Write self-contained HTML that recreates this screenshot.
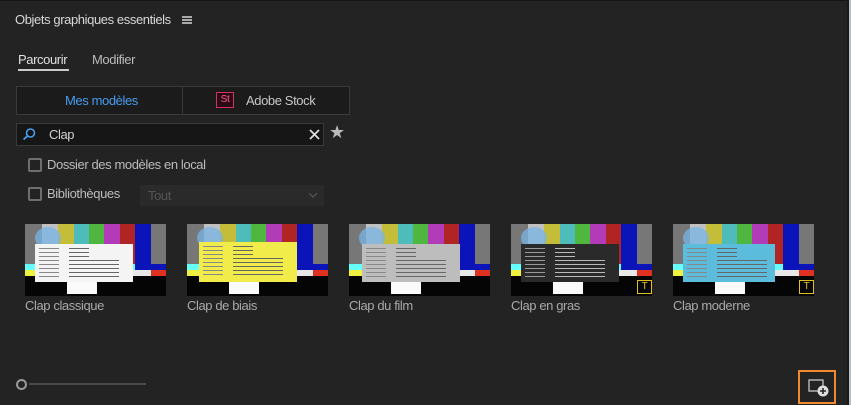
<!DOCTYPE html>
<html><head><meta charset="utf-8"><style>
*{margin:0;padding:0;box-sizing:border-box}
body{width:851px;height:405px;background:#232323;position:relative;overflow:hidden;font-family:"Liberation Sans",sans-serif;color:#c8c8c8;letter-spacing:-0.4px}
.a{position:absolute}
.th{position:absolute;top:224px;width:141px;height:72px;background:#000;overflow:hidden}
.th .b{position:absolute;top:0;height:40px}
.lbl{position:absolute;top:298px;font-size:13px;color:#a9a9a9}
.cb{position:absolute;width:14px;height:14px;border:2px solid #6e6e6e;border-radius:2px}
</style></head><body>
<div class="a" style="left:0;top:0;width:851px;height:1px;background:#151515"></div>
<div class="a" style="left:847px;top:0;width:2px;height:405px;background:#1a1a1a"></div>
<div class="a" style="left:849px;top:0;width:2px;height:405px;background:#b9bfc2"></div>
<div class="a" style="left:15px;top:12px;font-size:13px;color:#d8d8d8">Objets graphiques essentiels</div>
<div class="a" style="left:182px;top:16px;width:10px;height:2px;background:#aaa;box-shadow:0 3px 0 #aaa,0 6px 0 #aaa"></div>
<div class="a" style="left:18px;top:52px;font-size:13px;color:#e0e0e0">Parcourir</div>
<div class="a" style="left:18px;top:69px;width:51px;height:2px;background:#ccc"></div>
<div class="a" style="left:92px;top:52px;font-size:13px;color:#bbb">Modifier</div>
<div class="a" style="left:16px;top:86px;width:334px;height:29px;border:1px solid #3a3a3a;background:#1b1b1b"></div>
<div class="a" style="left:182px;top:86px;width:1px;height:29px;background:#3a3a3a"></div>
<div class="a" style="left:65px;top:93px;font-size:13px;color:#4a9cf0">Mes modèles</div>
<div class="a" style="left:216px;top:92px;width:18px;height:16px;background:#2a0a14;border:1px solid #d0335e;color:#ff5a8a;font-size:10px;text-align:center;line-height:14px">St</div>
<div class="a" style="left:246px;top:93px;font-size:13px;color:#c8c8c8">Adobe Stock</div>
<div class="a" style="left:16px;top:123px;width:308px;height:23px;border:1px solid #3a3a3a;background:#161616"></div>
<svg class="a" style="left:21px;top:127px" width="16" height="14"><circle cx="9.5" cy="6" r="4" fill="none" stroke="#4a9cf0" stroke-width="1.6"/><line x1="6.5" y1="9" x2="2.5" y2="12.5" stroke="#4a9cf0" stroke-width="1.8"/></svg>
<div class="a" style="left:49px;top:127px;font-size:13px;color:#d0d0d0">Clap</div>
<svg class="a" style="left:309px;top:129px" width="11" height="11"><path d="M1 1L10 10M10 1L1 10" stroke="#ddd" stroke-width="1.8"/></svg>
<div class="a" style="left:329px;top:122px;font-size:18px;color:#bbb">★</div>
<div class="cb" style="left:28px;top:158px"></div>
<div class="a" style="left:47px;top:157px;font-size:13px;color:#bcbcbc">Dossier des modèles en local</div>
<div class="cb" style="left:28px;top:187px"></div>
<div class="a" style="left:47px;top:186px;font-size:13px;color:#bcbcbc">Bibliothèques</div>
<div class="a" style="left:140px;top:185px;width:184px;height:21px;background:#2a2a2a;border-radius:2px"></div>
<div class="a" style="left:148px;top:188px;font-size:13px;color:#555">Tout</div>
<svg class="a" style="left:308px;top:192px" width="10" height="6"><path d="M1 1L5 5L9 1" fill="none" stroke="#555" stroke-width="1.2"/></svg>

<div id="t"></div>
<script>
var xs=[25,187,349,511,673],names=["Clap classique","Clap de biais","Clap du film","Clap en gras","Clap moderne"];
var cards=["#f4f4f4","#f2ec4a","#bdbdbd","#2a2a2a","#5bbcdc"];
var bars=[["#777",0,17],["#c0c0c0",17,16],["#c4bd3a",33,16],["#4fbcbc",49,15],["#4fb640",64,15],["#b23cb8",79,16],["#b02424",95,15],["#0a14b8",110,16],["#777",126,15]];
var h="";
xs.forEach(function(x,i){
 h+='<div class="th" style="left:'+x+'px">';
 bars.forEach(function(b){h+='<div class="b" style="left:'+b[1]+'px;width:'+b[2]+'px;background:'+b[0]+'"></div>';});
 h+='<div class="b" style="top:40px;left:0;width:141px;height:6px;background:#6ff;"></div>';
 h+='<div class="b" style="top:40px;left:110px;width:31px;height:6px;background:#0a14b8"></div>';
 h+='<div class="b" style="top:46px;left:0;width:141px;height:6px;background:#e8e8e8"></div>';
 h+='<div class="b" style="top:46px;left:0;width:17px;height:6px;background:#f0f040"></div>';
 h+='<div class="b" style="top:46px;left:126px;width:15px;height:6px;background:#e03020"></div>';
 h+='<div class="b" style="top:52px;left:0;width:141px;height:20px;background:#050505"></div>';
 h+='<div class="b" style="top:3px;left:10px;width:26px;height:22px;border-radius:50%;background:rgba(120,180,230,.75)"></div>';
 var cx=i==1?12:(i==2?13:10),cw=i==4?92:98,ct=i==1?18:20;
 h+='<div class="b" style="top:'+ct+'px;left:'+cx+'px;width:'+cw+'px;height:'+(i==1?40:38)+'px;background:'+cards[i]+'"></div>';
 h+='<div class="b" style="top:58px;left:42px;width:30px;height:12px;background:#fafafa"></div>';
 for(var r=0;r<8;r++){h+='<div class="b" style="top:'+(ct+4+r*4)+'px;left:'+(cx+4)+'px;width:20px;height:1px;background:'+(i==3?'#999':'#888')+'"></div><div class="b" style="top:'+(ct+4+r*4)+'px;left:'+(cx+34)+'px;width:'+(r<3?20:50)+'px;height:1px;background:'+(i==3?'#bbb':'#666')+'"></div>';}
 if(i>=3)h+='<div class="b" style="top:56px;left:126px;width:15px;height:14px;border:1px solid #e0c020;color:#e0c020;font-size:10px;line-height:12px;text-align:center">T</div>';
 h+='</div><div class="lbl" style="left:'+x+'px">'+names[i]+'</div>';
});
document.getElementById("t").innerHTML=h;
</script>
<div class="a" style="left:29px;top:383px;width:117px;height:2px;background:#4a4a4a"></div>
<div class="a" style="left:16px;top:379px;width:11px;height:11px;border:2px solid #9a9a9a;border-radius:50%"></div>
<div class="a" style="left:798px;top:370px;width:38px;height:34px;border:2px solid #f08a30"></div>
<svg class="a" style="left:808px;top:378px" width="22" height="20"><rect x="1" y="2" width="14" height="11" fill="none" stroke="#bbb" stroke-width="1.4"/><circle cx="15" cy="13" r="5.5" fill="#ddd"/><path d="M15 10v6M12 13h6" stroke="#232323" stroke-width="1.6"/></svg>
</body></html>
